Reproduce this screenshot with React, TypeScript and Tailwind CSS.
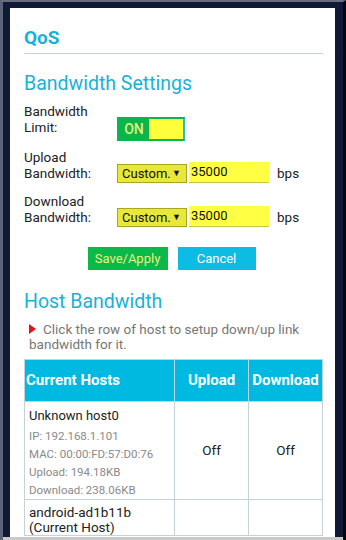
export default function App() {
  return (
    <div className="w-[346px] h-[540px] overflow-hidden bg-[#101a36] border-l-[3px] border-l-[#5d6379] border-t-[2px] border-t-[#6a6f80] border-r-[3px] border-r-[#05070d] font-['Roboto',sans-serif]">
      <div className="ml-[7px] mr-[8px] mt-[6px] h-[529px] bg-white pl-[14px] pr-[12px] overflow-hidden">
        <h1 className="pt-[18px] text-[19px] font-bold leading-[24px] text-[#18b2d8]">QoS</h1>
        <div className="mt-[3px] h-px bg-[#c4d3db]" />

        <h2 className="mt-[17px] text-[19.5px] leading-[26px] text-[#18b2d8]">Bandwidth Settings</h2>

        <div className="mt-[6px] flex items-start">
          <div className="w-[93px] text-[13.5px] leading-[16px] text-[#222]">
            Bandwidth
            <br />
            Limit:
          </div>
          <div className="mt-[14px] flex h-[24px] w-[68px] border-[2px] border-[#0ab54b] border-r-[#22b8e0] bg-[#0ab54b]">
            <span className="flex w-[30px] items-center justify-center text-[14px] font-medium text-[#e6f27a]">ON</span>
            <span className="flex-1 bg-[#fefe3a]" />
          </div>
        </div>

        {["Upload", "Download"].map((l, i) => (
          <div key={l} className={`${i === 0 ? "mt-[8px]" : "mt-[10px]"} flex items-start`}>
            <div className="w-[93px] text-[13.5px] leading-[16px] text-[#222]">
              {l}
              <br />
              Bandwidth:
            </div>
            <div className="mt-[15px] flex h-[19px] w-[70px] items-center justify-between border border-[#aaa61e] bg-[#e8e83a] pl-[4px] pr-[5px] text-[13px] text-[#111]">
              <span>Custom.</span>
              <span className="text-[9px]">▼</span>
            </div>
            <div className="ml-[2px] mt-[13px] flex h-[21px] w-[80px] items-center border-b border-b-[#c8c84a] bg-[#ffff44] pl-[2px] text-[13px] text-[#111]">35000</div>
            <span className="ml-[8px] mt-[15px] text-[13.5px] leading-[18px] text-[#222]">bps</span>
          </div>
        ))}

        <div className="mt-[20px] flex justify-center gap-[10px] pr-[4px]">
          <button className="h-[23px] w-[80px] bg-[#0bb94a] text-[13px] text-[#eef27c]">Save/Apply</button>
          <button className="h-[23px] w-[78px] bg-[#0cbce2] text-[13px] text-white">Cancel</button>
        </div>

        <h2 className="mt-[19px] text-[19.5px] leading-[26px] text-[#18b2d8]">Host Bandwidth</h2>
        <p className="mt-[7px] pl-[5px] text-[13.5px] leading-[15px] text-[#777]">
          <span className="mr-[7px] inline-block h-0 w-0 border-y-[5.5px] border-l-[7px] border-y-transparent border-l-[#e2111a] align-[0px]" />
          Click the row of host to setup down/up link bandwidth for it.
        </p>

        <table className="mt-[7px] w-[298px] table-fixed border-collapse">
          <colgroup>
            <col className="w-[150px]" />
            <col className="w-[74px]" />
            <col className="w-[74px]" />
          </colgroup>
          <thead>
            <tr className="h-[42px] bg-[#00b9e0] text-[15px] font-bold text-white">
              <th className="border border-[#c4d3db] pl-[1px] text-left">Current Hosts</th>
              <th className="border border-[#c4d3db] text-center">Upload</th>
              <th className="border border-[#c4d3db] text-center">Download</th>
            </tr>
          </thead>
          <tbody>
            <tr>
              <td className="border border-[#c4d3db] px-[4px] pt-[4px] pb-0 align-top">
                <div className="text-[13px] leading-[20px] text-[#222]">Unknown host0</div>
                <div className="mt-[1px] text-[11.5px] leading-[18px] text-[#8a8a8a]">
                  <div>IP: 192.168.1.101</div>
                  <div>MAC: 00:00:FD:57:D0:76</div>
                  <div>Upload: 194.18KB</div>
                  <div>Download: 238.06KB</div>
                </div>
              </td>
              <td className="border border-[#c4d3db] text-center text-[13.5px] text-[#222]">Off</td>
              <td className="border border-[#c4d3db] text-center text-[13.5px] text-[#222]">Off</td>
            </tr>
            <tr>
              <td className="border border-[#c4d3db] px-[4px] pt-[5px] align-top text-[13.5px] leading-[15px] text-[#222]">
                android-ad1b11b
                <br />
                (Current Host)
              </td>
              <td className="border border-[#c4d3db]" />
              <td className="border border-[#c4d3db]" />
            </tr>
          </tbody>
        </table>
      </div>
      <div className="h-[3px] bg-[#c9c9c9]" />
    </div>
  );
}
